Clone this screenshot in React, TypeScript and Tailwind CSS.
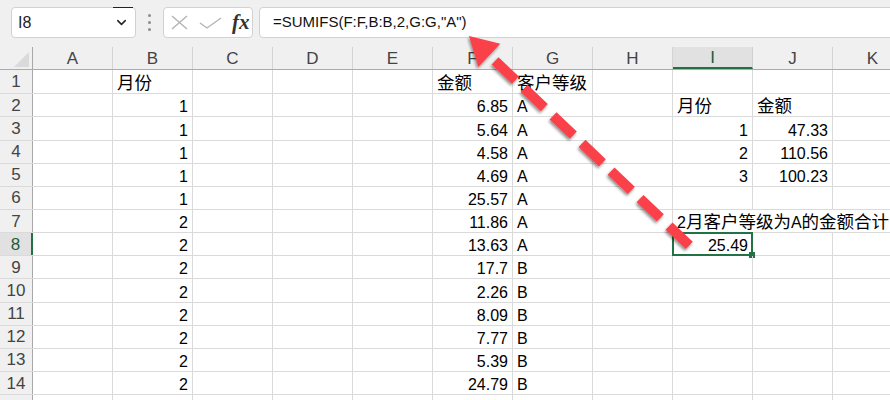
import type { ReactNode } from 'react';
import { ChevronDown } from 'lucide-react';

const KOLOM = ['A', 'B', 'C', 'D', 'E', 'F', 'G', 'H', 'I', 'J', 'K'];

const bulan = [1, 1, 1, 1, 1, 2, 2, 2, 2, 2, 2, 2, 2];
const jumlah = ['6.85', '5.64', '4.58', '4.69', '25.57', '11.86', '13.63', '17.7', '2.26', '8.09', '7.77', '5.39', '24.79'];
const tingkat = ['A', 'A', 'A', 'A', 'A', 'A', 'A', 'B', 'B', 'B', 'B', 'B', 'B'];
const ringkasan = ['47.33', '110.56', '100.23'];

// teks CJK sedikit lebih besar dari angka, seperti di Excel
function Cjk({ children }: { children: ReactNode }) {
  return <span className="text-[17.5px]">{children}</span>;
}

type Isi = { teks: ReactNode; kanan?: boolean } | null;

function isiSel(baris: number, kolom: string): Isi {
  if (baris > 14) return null;
  if (baris === 1) {
    if (kolom === 'B') return { teks: <Cjk>月份</Cjk> };
    if (kolom === 'F') return { teks: <Cjk>金额</Cjk> };
    if (kolom === 'G') return { teks: <Cjk>客户等级</Cjk> };
    return null;
  }
  const i = baris - 2;
  if (kolom === 'B') return { teks: bulan[i], kanan: true };
  if (kolom === 'F') return { teks: jumlah[i], kanan: true };
  if (kolom === 'G') return { teks: tingkat[i] };
  if (baris === 2 && kolom === 'I') return { teks: <Cjk>月份</Cjk> };
  if (baris === 2 && kolom === 'J') return { teks: <Cjk>金额</Cjk> };
  if (baris >= 3 && baris <= 5) {
    if (kolom === 'I') return { teks: baris - 2, kanan: true };
    if (kolom === 'J') return { teks: ringkasan[baris - 3], kanan: true };
  }
  if (baris === 8 && kolom === 'I') return { teks: '25.49', kanan: true };
  return null;
}

function Sel({ baris, kolom }: { baris: number; kolom: string }) {
  const isi = isiSel(baris, kolom);
  const tumpah = baris === 7 && (kolom === 'I' || kolom === 'J');
  const terpilih = baris === 8 && kolom === 'I';
  return (
    <div
      className={`relative flex h-full w-20 shrink-0 items-end px-[4px] pb-px leading-none text-black ${
        tumpah ? '' : 'border-r border-[#dadada]'
      } ${isi?.kanan ? 'justify-end' : 'justify-start'}`}
    >
      {baris === 7 && kolom === 'I' ? (
        <span className="z-10 whitespace-nowrap">
          2<Cjk>月客户等级为</Cjk>A<Cjk>的金额合计</Cjk>
        </span>
      ) : (
        isi && <span className="whitespace-nowrap">{isi.teks}</span>
      )}
      {terpilih && (
        <>
          <div className="absolute -top-px -left-px -right-px -bottom-px border-2 border-[#217346]" />
          <div className="absolute -right-[3px] -bottom-[3px] h-[6px] w-[6px] bg-[#217346]" />
        </>
      )}
    </div>
  );
}

function BarisData({ baris }: { baris: number }) {
  const dipilih = baris === 8;
  return (
    <div className={`flex shrink-0 border-b border-[#dadada] ${baris === 1 ? 'h-[24.3px]' : 'h-[23.15px]'}`}>
      <div
        className={`flex h-full w-[33px] shrink-0 items-center justify-center text-[17px] leading-none ${
          dipilih
            ? 'border-r-2 border-[#217346] bg-[#e1e1e1] text-[#1e5c3a]'
            : 'border-r border-[#a8a8a8] bg-[#f0f0f0] text-[#444]'
        }`}
      >
        {baris <= 14 ? baris : ''}
      </div>
      {KOLOM.map((k) => (
        <Sel key={k} baris={baris} kolom={k} />
      ))}
    </div>
  );
}

export default function App() {
  const barisList = Array.from({ length: 15 }, (_, i) => i + 1);

  return (
    <div className="relative h-[400px] w-[890px] overflow-hidden bg-white font-['Liberation_Sans','Noto_Sans_CJK_SC',sans-serif] text-[16px]">
      {/* bilah rumus */}
      <div className="flex h-[47px] items-start bg-[#f0f0f0] pt-[7px]">
        <div className="relative ml-[11px] flex h-[31px] w-[125px] shrink-0 items-center justify-between rounded-[4px] border border-[#d2d2d2] bg-white pl-[6px] pr-[6px]">
          <span className="text-[16px] text-[#222]">I8</span>
          <ChevronDown size={15} strokeWidth={2.4} className="text-[#222]" />
          <div className="absolute -top-px right-[2px] h-px w-[20px] bg-[#222]" />
        </div>
        <div className="flex h-[31px] w-[27px] shrink-0 flex-col items-center justify-center gap-[4px]">
          <div className="h-[3px] w-[3px] rounded-full bg-[#8c8c8c]" />
          <div className="h-[3px] w-[3px] rounded-full bg-[#8c8c8c]" />
          <div className="h-[3px] w-[3px] rounded-full bg-[#8c8c8c]" />
        </div>
        <div className="flex h-[31px] w-[90px] shrink-0 items-center rounded-[4px] border border-[#d2d2d2] bg-white pl-[6px]">
          <svg width="17" height="15" viewBox="0 0 17 15" className="ml-px">
            <path d="M1 1 L16 14 M16 1 L1 14" stroke="#b3b3b3" strokeWidth="1.4" fill="none" />
          </svg>
          <svg width="23" height="12" viewBox="0 0 23 12" className="ml-[11px]">
            <path d="M1 6 L8 11 L22 1" stroke="#b3b3b3" strokeWidth="1.4" fill="none" />
          </svg>
          <span className="ml-[10px] font-['Liberation_Serif',serif] text-[21px] font-bold italic leading-none text-[#333]">
            fx
          </span>
        </div>
        <div className="ml-[6px] flex h-[31px] w-[660px] shrink-0 items-center rounded-[4px] border border-[#d2d2d2] bg-white pl-[13px] text-[15px] text-[#111]">
          =SUMIFS(F:F,B:B,2,G:G,"A")
        </div>
      </div>

      {/* kepala kolom */}
      <div className="flex h-[23px] border-b border-[#ababab] bg-[#f0f0f0]">
        <div className="relative h-full w-[33px] shrink-0 border-r border-[#a8a8a8]">
          <svg width="15" height="15" viewBox="0 0 15 15" className="absolute right-[3px] bottom-[2px]">
            <polygon points="15,0 15,15 0,15" fill="#dadada" />
          </svg>
        </div>
        {KOLOM.map((k) => (
          <div
            key={k}
            className={`flex h-full w-20 shrink-0 items-center justify-center border-r text-[17px] leading-none ${
              k === 'I'
                ? 'border-b-2 border-[#d0d0d0] border-b-[#217346] bg-[#e1e1e1] text-[#1e5c3a]'
                : 'border-[#d4d4d4] text-[#444]'
            }`}
          >
            {k}
          </div>
        ))}
      </div>

      {barisList.map((b) => (
        <BarisData key={b} baris={b} />
      ))}

      {/* panah anotasi */}
      <svg className="pointer-events-none absolute inset-0" width="890" height="400" viewBox="0 0 890 400">
        <defs>
          <filter id="bayang" x="-20%" y="-20%" width="140%" height="140%">
            <feDropShadow dx="-1" dy="2" stdDeviation="1.5" floodColor="#000" floodOpacity="0.45" />
          </filter>
        </defs>
        <g filter="url(#bayang)">
          <line
            x1="489.3"
            y1="55.3"
            x2="692"
            y2="248"
            stroke="#fa4048"
            strokeWidth="10"
            strokeDasharray="28 12"
            strokeDashoffset="32"
          />
          <polygon points="469,36 500.3,43.7 478.3,66.9" fill="#fa4048" />
        </g>
      </svg>
    </div>
  );
}
